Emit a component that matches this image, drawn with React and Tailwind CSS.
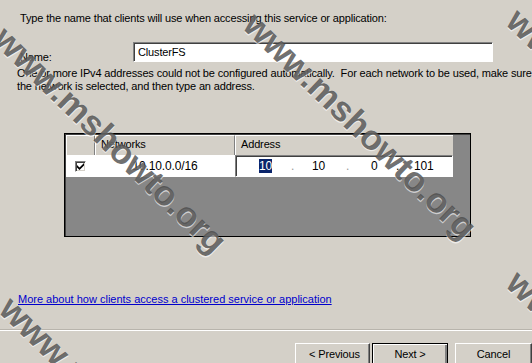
import React from "react";

const Watermark = ({ x, y }) => (
  <span
    className="absolute whitespace-nowrap font-bold text-[35px] leading-none text-[#4a4a4a]/80 [text-shadow:1px_1px_0_rgba(255,255,255,0.6)] origin-top-left rotate-[44deg] select-none"
    style={{ left: x, top: y }}
  >
    www.mshowto.org
  </span>
);

export default function App() {
  return (
    <div className="relative w-[532px] h-[363px] overflow-hidden bg-[#d4d0c8] font-['Liberation_Sans',Arial,sans-serif] text-[11px] leading-[13px] text-black tracking-[-0.15px]">
      <div className="pt-[12px] pl-[20px]">
        Type the name that clients will use when accessing this service or application:
      </div>

      <div className="flex items-end mt-[17px] pl-[20px]">
        <div className="w-[113px] -mb-[2px]">Name:</div>
        <div className="w-[360px] h-[20px] bg-white border border-t-[#808080] border-l-[#808080] border-r-white border-b-white shadow-[inset_1px_1px_0_#404040] flex items-center pl-[4px]">
          ClusterFS
        </div>
      </div>

      <div className="pl-[17px] mt-[5px] whitespace-nowrap">
        One or more IPv4 addresses could not be configured automatically.&nbsp; For each network to be used, make sure
        <br />
        the network is selected, and then type an address.
      </div>

      <div className="ml-[64px] mt-[40px] w-[407px] h-[104px] border border-black shadow-[inset_1px_1px_0_#404040] bg-[#878787] p-[1px]">
        <div className="flex h-[20px] w-[387px] bg-[#d4d0c8]">
          <div className="w-[29px] border-t border-t-white border-r border-r-[#808080] shadow-[inset_1px_0_0_white]" />
          <div className="w-[140px] border-t border-t-white border-r border-r-[#808080] shadow-[inset_1px_0_0_white] pl-[6px] pt-[2px]">
            Networks
          </div>
          <div className="flex-1 border-t border-t-white shadow-[inset_1px_0_0_white] pl-[6px] pt-[2px]">
            Address
          </div>
        </div>
        <div className="flex h-[22px] w-[387px] bg-white">
          <div className="w-[29px] flex items-center justify-center">
            <div className="w-[11px] h-[11px] bg-white border border-t-[#808080] border-l-[#808080] border-r-white border-b-white shadow-[inset_1px_1px_0_#404040,inset_-1px_-1px_0_#d4d0c8] flex items-center justify-center">
              <svg width="7" height="7" viewBox="0 0 7 7">
                <path d="M0 2 L0 4.5 L2.5 7 L7 2.5 L7 0 L2.5 4.5 Z" fill="#000" />
              </svg>
            </div>
          </div>
          <div className="w-[140px] flex items-center justify-center text-[12px]">
            10.10.0.0/16
          </div>
          <div className="flex-1 border border-t-[#808080] border-l-[#808080] border-r-white border-b-white shadow-[inset_1px_1px_0_#404040] flex items-center text-[12px] pl-[23px]">
            <div className="w-[32px]">
              <span className="bg-[#0a246a] text-white">10</span>
            </div>
            <span className="w-[21px] text-[#999]">.</span>
            <div className="w-[34px]">10</div>
            <span className="w-[25px] text-[#999]">.</span>
            <div className="w-[25px]">0</div>
            <span className="w-[18px]">.</span>
            <div>101</div>
          </div>
        </div>
      </div>

      <div className="pl-[18px] mt-[56px]">
        <span className="text-[#0000cc] underline tracking-normal">
          More about how clients access a clustered service or application
        </span>
      </div>

      <div className="mt-[24px] h-[1px] bg-white shadow-[0_-1px_0_#b8b4ac]" />

      <div className="flex justify-end mt-[12px] gap-[2px]">
        <button className="w-[75px] h-[23px] bg-[#d4d0c8] border border-t-white border-l-white border-r-[#404040] border-b-[#404040] shadow-[inset_-1px_-1px_0_#808080] pl-[4px] flex items-center justify-center">
          &lt; Previous
        </button>
        <button className="w-[76px] h-[23px] bg-[#d4d0c8] border border-black shadow-[inset_1px_1px_0_white,inset_-2px_-2px_0_#808080] flex items-center justify-center">
          Next &gt;
        </button>
        <button className="ml-[5px] w-[77px] h-[23px] bg-[#d4d0c8] border border-t-white border-l-white border-r-[#404040] border-b-[#404040] shadow-[inset_-1px_-1px_0_#808080] flex items-center justify-center">
          Cancel
        </button>
      </div>

      <div className="pointer-events-none absolute inset-0">
        <Watermark x={12} y={20} />
        <Watermark x={262} y={6} />
        <Watermark x={525} y={2} />
        <Watermark x={18} y={290} />
        <Watermark x={525} y={264} />
      </div>
    </div>
  );
}
